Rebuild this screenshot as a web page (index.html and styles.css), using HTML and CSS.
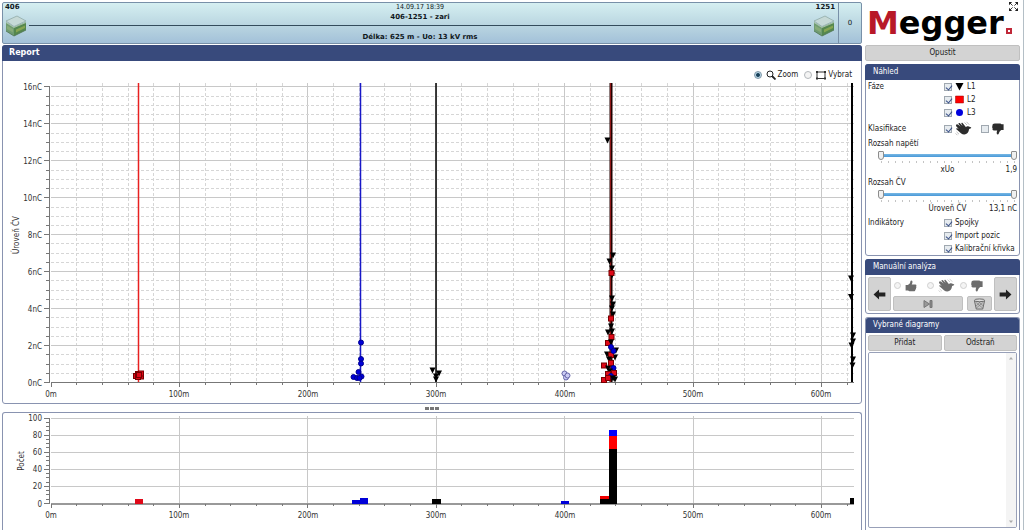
FILE: index.html
```html
<!DOCTYPE html>
<html lang="cs">
<head>
<meta charset="utf-8">
<title>406-1251 - zari</title>
<link rel="stylesheet" href="styles.css">
</head>
<body>
<svg class="symbols" aria-hidden="true">
  <symbol id="station" viewBox="0 0 22 22">
    <path d="M1 7 9 12V21L1 16Z" fill="#6f9b72"/>
    <path d="M9 12 21 7V15L9 21Z" fill="#55874e"/>
    <path d="M11 14.500 20 10.500V13L11 17.500Z" fill="#86a552"/>
    <path d="M2 10.500 8 14V17.500L2 14Z" fill="#86ab78"/>
    <path d="M1 6 12 1 21 6 9 11.500Z" fill="#c6d9d6" stroke="#8aa5a0" stroke-width=".7"/>
    <path d="M1 7.500 9 12.500 21 7.500" fill="none" stroke="#b8ceb8" stroke-width=".8"/>
    <path d="M1 16 9 21 21 15" fill="none" stroke="#4c7350" stroke-width=".8"/>
  </symbol>
  <symbol id="wave" viewBox="0 0 17 15">
    <path d="M1.300 3.700C1.800 3 2.700 3.300 3.300 3.800L5.600 5.800 3.600 3.100C3.200 2.300 4.200 1.700 4.900 2.300L7.600 5 6.300 2.600C6.100 1.700 7.100 1.500 7.600 2.100L11 6.200C11.300 5.200 12.300 4.900 13.200 5.300L15.800 6.200C16.600 6.600 16.100 7.300 15.400 7.500L14.100 8C13.800 11.300 11.900 13.300 9.300 13.500 7.100 13.600 5.400 12.200 4 10.600L1.400 8.300C.9 7.500 1.600 6.900 2.400 7.300L3.900 8.200 1.200 5.200C.8 4.600.9 4.100 1.300 3.700Z" fill="currentColor"/>
    <path d="M9.500 1.500 12 4M11.500.8 14.300 3.700M1.500 10.800 4 13.200M.6 12.400 2.400 14.200" fill="none" stroke="currentColor" stroke-width=".6" opacity=".5"/>
  </symbol>
  <symbol id="down" viewBox="0 0 12 12">
    <path d="M.4 3C.4 1.300 1.300.6 2.800.6H8.400L9.500 1.200H11.600V7H9.300C7.900 7.800 7.300 9 6.800 10.500 6.600 11.500 5.200 11.900 4.800 10.700 4.500 9.500 4.900 8.400 5.200 7.500H2C.6 7.500.1 6.500.7 5.600.1 4.800.1 3.700.4 3Z" fill="currentColor"/>
  </symbol>
  <symbol id="up" viewBox="0 0 12 12">
    <path d="M.6 5H2.700C4.600 4.200 5.300 3 5.400 1.200 5.700.2 7.100.2 7.400 1.300 7.600 2.600 7.200 3.600 6.700 4.500H10.400C11.600 4.700 11.700 5.800 11.100 6.300 11.700 7 11.500 7.800 10.900 8.100 11.200 8.900 10.900 9.500 10.300 9.700 10.300 10.700 9.700 11.200 8.900 11.200H4.400L3 10.600H.6Z" fill="currentColor"/>
  </symbol>
  <symbol id="arrow" viewBox="0 0 14 12">
    <path d="M13.500 6 7.500.6V3.700H.6V8.300H7.500V11.400Z" fill="currentColor"/>
  </symbol>
</svg>

<div class="app">
  <main class="main">
    <header class="cable">
      <div class="cable-body">
        <div class="station"><b>406</b><svg class="station-icon"><use href="#station"/></svg></div>
        <div class="cable-info">
          <time>14.09.17 18:39</time>
          <b>406-1251 - zari</b>
          <hr>
          <b>Délka: 625 m - Uo: 13 kV rms</b>
        </div>
        <div class="station station-end"><b>1251</b><svg class="station-icon"><use href="#station"/></svg></div>
      </div>
      <div class="cable-count">0</div>
    </header>

    <section class="panel">
      <h1 class="panel-title report-title">Report</h1>
      <div class="modes">
        <label><input type="radio" class="radio" name="mode" checked>
          <svg class="mode-icon" viewBox="0 0 10 10"><circle cx="4" cy="4" r="3" fill="#fff" stroke="#222"/><path d="M6 6 9.500 9.500" stroke="#222" stroke-width="1.800"/></svg>Zoom</label>
        <label><input type="radio" class="radio" name="mode">
          <svg class="mode-icon" viewBox="0 0 10 10"><path d="M1 2H9V8.500H1Z" fill="none" stroke="#333"/><path d="M0 1H2V3H0ZM8 1H10V3H8ZM0 7.500H2V9.500H0ZM8 7.500H10V9.500H8Z" fill="#333"/></svg>Vybrat</label>
      </div>
      <svg class="chart" id="level-chart" viewBox="3 82 858 321" role="img" aria-label="Úroveň ČV"></svg>
    </section>
    <div class="splitter"><i></i><i></i><i></i></div>
    <section class="panel panel-last">
      <svg class="chart" id="count-chart" viewBox="3 413 858 117" role="img" aria-label="Počet"></svg>
    </section>
  </main>

  <aside class="side">
    <div class="brand">
      <div class="logo"><span class="logo-m">M</span>egger<span class="logo-mark"></span></div>
      <button class="fullscreen" aria-label="Celá obrazovka"><svg viewBox="0 0 10 10"><path d="M0 0H3.500L0 3.500ZM10 0V3.500L6.500 0ZM0 10V6.500L3.500 10ZM10 10H6.500L10 6.500Z" fill="#222"/><path d="M1 1 4 4M9 1 6 4M1 9 4 6M9 9 6 6" stroke="#222"/></svg></button>
    </div>
    <button class="btn exit">Opustit</button>

    <section class="panel">
      <h2 class="panel-title">Náhled</h2>
      <div class="preview">
        <div class="row"><span>Fáze</span><label><input type="checkbox" class="check" checked><svg class="mark" viewBox="0 0 9 9"><path d="M.5 1H8.500L4.500 8.500Z"/></svg>L1</label></div>
        <div class="row"><span></span><label><input type="checkbox" class="check" checked><svg class="mark" viewBox="0 0 9 9"><path d="M.5 1H8.500V8H.5Z" fill="red" stroke="#900" stroke-width=".5"/></svg>L2</label></div>
        <div class="row"><span></span><label><input type="checkbox" class="check" checked><svg class="mark" viewBox="0 0 9 9"><circle cx="4.500" cy="4.500" r="3.500" fill="#00d"/></svg>L3</label></div>
        <div class="row classes"><span>Klasifikace</span>
          <label><input type="checkbox" class="check" checked aria-label="PD"><svg class="hand-wave"><use href="#wave"/></svg></label>
          <label><input type="checkbox" class="check" aria-label="Rušení"><svg class="hand"><use href="#down"/></svg></label></div>
        <div class="range-name">Rozsah napětí</div>
        <div class="range"><input type="range" value="0" aria-label="Napětí od"><input type="range" value="100" aria-label="Napětí do"></div>
        <div class="ticks"></div>
        <div class="range-foot"><span>xUo</span><output>1,9</output></div>
        <div class="range-name">Rozsah ČV</div>
        <div class="range"><input type="range" value="0" aria-label="ČV od"><input type="range" value="100" aria-label="ČV do"></div>
        <div class="ticks"></div>
        <div class="range-foot"><span>Úroveň ČV</span><output>13,1 nC</output></div>
        <div class="row"><span>Indikátory</span><label><input type="checkbox" class="check" checked>Spojky</label></div>
        <div class="row"><span></span><label><input type="checkbox" class="check" checked>Import pozic</label></div>
        <div class="row"><span></span><label><input type="checkbox" class="check" checked>Kalibrační křivka</label></div>
      </div>
    </section>

    <section class="panel">
      <h2 class="panel-title">Manuální analýza</h2>
      <div class="analysis">
        <button class="btn step" aria-label="Předchozí"><svg class="arrow arrow-back"><use href="#arrow"/></svg></button>
        <div class="verdict">
          <label><input type="radio" class="radio" name="verdict" disabled aria-label="Dobré"><svg class="hand"><use href="#up"/></svg></label>
          <label><input type="radio" class="radio" name="verdict" disabled aria-label="Nejisté"><svg class="hand-wave"><use href="#wave"/></svg></label>
          <label><input type="radio" class="radio" name="verdict" disabled aria-label="Špatné"><svg class="hand"><use href="#down"/></svg></label>
          <button class="btn skip" aria-label="Na konec"><svg viewBox="0 0 10 8"><path d="M1 .5 6.500 4 1 7.500Z" fill="#999" stroke="#777"/><path d="M7 .5H9V7.500H7Z" fill="#888" stroke="#777"/></svg></button>
          <button class="btn trash" aria-label="Smazat"><svg viewBox="0 0 13 13"><path d="M1 3 3 12H10L12 3Z" fill="#c4c4c4" stroke="#666"/><ellipse cx="6.500" cy="2.500" rx="5.500" ry="1.500" fill="#ddd" stroke="#666"/><path d="M3 5 10 11M6 4.500 11 9M10 5 3 11M7 4.500 2.500 9" stroke="#777" stroke-width=".7"/></svg></button>
        </div>
        <button class="btn step" aria-label="Další"><svg class="arrow"><use href="#arrow"/></svg></button>
      </div>
    </section>

    <section class="panel panel-last diagrams">
      <h2 class="panel-title">Vybrané diagramy</h2>
      <div class="pair"><button class="btn">Přidat</button><button class="btn">Odstraň</button></div>
      <div class="list">
        <select multiple aria-label="Vybrané diagramy"></select>
        <div class="scroll"><button aria-label="Nahoru"><svg viewBox="0 0 6 4"><path d="M1 3.500 3 1 5 3.500Z"/></svg></button><button aria-label="Dolů"><svg viewBox="0 0 6 4"><path d="M1 .5 3 3 5 .5Z"/></svg></button></div>
      </div>
    </section>
  </aside>
</div>
<script src="charts.js"></script>
</body>
</html>
```
FILE: styles.css
```css
* { box-sizing: border-box; }

body {
  margin: 0;
  background: #fff;
  color: #222;
  font: 8px/10px "DejaVu Sans Condensed", "DejaVu Sans", sans-serif;
}

button, input, select { margin: 0; padding: 0; font: inherit; color: inherit; }
label { display: flex; align-items: center; }
svg { display: block; flex: none; }
.symbols { position: absolute; width: 0; height: 0; }

.app {
  display: grid;
  grid-template-columns: minmax(0, 1fr) 155px;
  gap: 3px;
  height: 100vh;
  min-height: 500px;
  padding: 2px 3px 0 2px;
  border-right: 1px solid #b4bfc6;
  overflow: hidden;
}
.main { display: flex; flex-direction: column; min-height: 0; }

/* Cable strip */
.cable {
  display: flex;
  flex: none;
  height: 42px;
  margin-bottom: 1px;
  border: 1px solid #7890a8;
  border-radius: 2px;
  background: linear-gradient(#d5eff1, #bad6e1 55%, #a3c1d9);
  font: 7px/9px "DejaVu Sans", sans-serif;
  color: #10181c;
}
.cable-body { display: flex; flex: 1; justify-content: space-between; padding: 0 3px 0 2px; }
.station { display: flex; flex-direction: column; width: 24px; gap: 3px; }
.station-end { align-items: flex-end; }
.station-icon { width: 22px; height: 22px; }
.cable-info { flex: 1; display: flex; flex-direction: column; align-items: center; }
.cable-info time { font-family: "DejaVu Sans Condensed", sans-serif; line-height: 8px; }
.cable-info b { line-height: 12px; }
.cable-info hr { width: 100%; height: 2px; margin: 2px 0 5px; border: 0; background: #344c5c; }
.cable-count {
  display: grid;
  place-items: center;
  width: 23px;
  border-left: 1px solid #7890a8;
}

/* Panels */
.panel { border: 1px solid #8993b0; border-radius: 3px; background: #fff; }
.panel-last { flex: 1; min-height: 0; border-bottom: 0; border-radius: 3px 3px 0 0; overflow: hidden; }
.panel-title {
  margin: -1px -1px 0;
  padding: 0 8px;
  border-radius: 3px 3px 0 0;
  background: #384a7c;
  color: #fff;
  font-size: 8px;
  font-weight: 400;
  line-height: 16px;
}
.report-title { padding: 0 7px; font-family: "DejaVu Sans", sans-serif; font-weight: 700; }
.modes { display: flex; justify-content: flex-end; gap: 6px; height: 21px; padding: 6px 9px 0 0; }
.modes label { height: 16px; }
.mode-icon { width: 10px; height: 10px; margin: 0 2px 0 4px; }
.splitter { display: flex; flex: none; justify-content: center; align-items: center; gap: 1px; height: 8px; }
.splitter i { width: 4px; height: 3px; background: #777; }

/* Charts */
.chart { width: 100%; height: auto; }
.chart text { fill: #333; }
.tick-x { text-anchor: middle; }
.tick-y { text-anchor: end; }
.axis { stroke: #777; }
.axis-thick { stroke: #999; stroke-width: 2; }
.major { stroke: #c8c8c8; }
.minor { stroke: #d6d6d6; stroke-dasharray: 3 2; }
.l1 { fill: #000; }
.l2 { fill: #e00818; stroke: #700; stroke-width: 1; }
.l3 { fill: #0000d8; stroke: #000090; stroke-width: 1; }
.l3-open { fill: #ccccf4; stroke: #6666a8; }

/* Form controls */
.check, .radio {
  appearance: none;
  flex: none;
  width: 8px;
  height: 8px;
  border: 1px solid #a0a8b0;
  background: #e6ebef;
}
.check:checked::after {
  content: "";
  display: block;
  width: 3px;
  height: 5px;
  margin: 0 0 0 2px;
  border: solid #3a5088;
  border-width: 0 1px 1px 0;
  transform: rotate(40deg);
}
.radio { border-radius: 50%; border-color: #b4b8bc; background: #f4f4f4; }
.radio:checked { border-color: #8098a8; background: radial-gradient(#184058 35%, #b8d4e4 55%); }
.btn {
  display: grid;
  place-items: center;
  border: 1px solid #c0c0c0;
  border-radius: 2px;
  background: #d3d3d3;
}

/* Sidebar */
.side { display: flex; flex-direction: column; gap: 3px; min-height: 0; }
.brand { display: flex; align-items: flex-start; height: 40px; position: relative; }
.logo {
  padding-left: 2px;
  font: 700 32px/42px "DejaVu Sans", sans-serif;
  color: #000;
  white-space: nowrap;
}
.logo-m { color: #b81828; }
.logo-mark { display: inline-block; width: 6px; height: 6px; margin-left: 2px; border: 2px solid #c02838; background: #fff; }
.fullscreen { position: absolute; top: 0; right: 2px; width: 9px; height: 9px; border: 0; background: none; }
.exit { height: 16px; }

.preview { padding: 0 2px 0 2px; }
.row { display: flex; align-items: center; height: 13px; }
.row > span { flex: none; width: 76px; }
.row label { flex: none; gap: 3px; }
.mark { width: 9px; height: 9px; }
.classes { height: 19px; }
.classes label { width: 37px; }
.hand-wave { width: 17px; height: 15px; color: #2c2c2c; }
.hand { width: 12px; height: 12px; color: #2c2c2c; }
.range-name { line-height: 12px; }
.range {
  display: grid;
  height: 11px;
  margin-left: 10px;
  background: linear-gradient(#78b8e4, #4898d8) center / 100% 3px no-repeat;
}
.range input {
  grid-area: 1 / 1;
  appearance: none;
  width: 100%;
  height: 11px;
  background: none;
  pointer-events: none;
}
.range input::-webkit-slider-thumb {
  appearance: none;
  width: 6px;
  height: 9px;
  border: 1px solid #8c8c8c;
  border-radius: 1px 1px 3px 3px;
  background: #f0f0f0;
  pointer-events: auto;
}
.ticks {
  height: 2px;
  margin: 0 2px 0 13px;
  background: repeating-linear-gradient(90deg, #c4c4c4 0 1px, transparent 1px 7px);
}
.range-foot { display: grid; grid-template-columns: 1fr auto 1fr; padding-left: 10px; line-height: 14px; }
.range-foot span { grid-column: 2; }
.range-foot output { text-align: right; }

.analysis { display: flex; gap: 2px; padding: 2px; }
.step { width: 23px; height: 34px; color: #222; }
.arrow { width: 13px; height: 11px; }
.arrow-back { transform: scaleX(-1); }
.verdict {
  flex: 1;
  display: grid;
  grid-template-columns: 1fr 1fr 1fr;
  grid-template-rows: 17px 15px;
  gap: 2px 0;
}
.verdict label { gap: 4px; padding-left: 1px; }
.verdict .radio { border-color: #d0d0d0; width: 7px; height: 7px; }
.verdict .hand, .verdict .hand-wave { color: #6c6c6c; }
.skip { grid-column: 1 / 3; margin-right: -4px; }
.skip svg { width: 10px; height: 8px; }
.trash { margin-left: 8px; }
.trash svg { width: 13px; height: 12px; }

.diagrams { display: flex; flex-direction: column; }
.pair { display: grid; grid-template-columns: 1fr 1fr; gap: 2px; padding: 2px 2px 0; }
.pair .btn { height: 16px; }
.list { display: flex; flex: 1; min-height: 0; margin: 1px 2px 2px; border: 1px solid #98a0b8; border-radius: 2px; }
.list select { flex: 1; min-width: 0; border: 0; background: #fff; outline: 0; }
.scroll { display: flex; flex-direction: column; justify-content: space-between; width: 10px; background: #f4f4f4; }
.scroll button { display: grid; place-items: center; height: 10px; border: 0; background: none; }
.scroll svg { width: 6px; height: 4px; fill: #aaa; }
```
FILE: charts.js
```js
const NS = "http://www.w3.org/2000/svg";
const LEFT = 51, RIGHT = 854, METRE = 1.284;
const px = m => LEFT + m * METRE;

function add(svg, name, attrs, text) {
  const el = document.createElementNS(NS, name);
  for (const key in attrs) el.setAttribute(key, attrs[key]);
  if (text !== undefined) el.textContent = text;
  svg.appendChild(el);
}
const snap = v => Math.floor(v) + 0.5;
function line(svg, x1, y1, x2, y2, cls) {
  add(svg, "line", { x1, y1, x2, y2, class: cls });
}

function axes(svg, o) {
  for (let m = 20; m <= 620; m += 20) {
    const major = m % 100 === 0;
    if (major || o.minorGrid) line(svg, snap(px(m)), o.top, snap(px(m)), o.base, major ? "major" : "minor");
  }
  for (let v = o.step; v <= o.max; v += o.step) {
    const y = snap(o.y(v)), major = v % o.label === 0;
    if (major || o.minorGrid) line(svg, LEFT, y, RIGHT, y, major ? "major" : "minor");
  }
  line(svg, 49.5, o.y(o.max), 49.5, o.base, "axis");
  if (o.thick) line(svg, LEFT, o.base, RIGHT, o.base, "axis-thick");
  else line(svg, LEFT, o.base - 0.5, RIGHT, o.base - 0.5, "axis");
  for (let v = 0; v <= o.max; v += o.step) {
    const major = v % o.label === 0, y = snap(o.y(v));
    line(svg, major ? 44 : 46, y, 50, y, "axis");
    if (major) add(svg, "text", { x: 42, y: Math.round(o.y(v)) + 3, class: "tick-y" }, v + o.unit);
  }
  for (let m = 0; m <= 620; m += 20) {
    const major = m % 100 === 0, x = snap(px(m));
    line(svg, x, o.base, x, o.base + (major ? 4 : 2), "axis");
    if (major) add(svg, "text", { x: Math.round(px(m)), y: o.base + 14, class: "tick-x" }, m + "m");
  }
  add(svg, "text", { transform: `translate(${o.titleX} ${o.titleY}) rotate(-90)`, class: "tick-x" }, o.title);
}

const marker = {
  l1: (s, x, y) => add(s, "path", { d: `M${x - 3} ${y - 2.500}h6l-3 6z`, class: "l1" }),
  l2: (s, x, y) => add(s, "rect", { x: x - 2.500, y: y - 2.500, width: 5, height: 5, class: "l2" }),
  l3: (s, x, y) => add(s, "circle", { cx: x, cy: y, r: 2.500, class: "l3" }),
  open: (s, x, y) => add(s, "circle", { cx: x, cy: y, r: 2.500, class: "l3-open" })
};

const level = document.getElementById("level-chart");
axes(level, { top: 83, base: 383, max: 16, step: 0.5, label: 2, unit: "nC", minorGrid: true,
  y: v => 382.500 - v * 18.470, title: "Úroveň ČV", titleX: 19, titleY: 235 });

[[138.500, "#e82020", 1.500], [360.500, "#1818c8", 1.500], [436, "#000", 1.500],
 [611, "#200000", 3], [610.500, "#901818", 1], [852, "#000", 2]].forEach(([x, stroke, w]) =>
  add(level, "line", { x1: x, x2: x, y1: 83, y2: 382, stroke, "stroke-width": w }));

const points = [
  ["l2", 136, 376], ["l2", 138, 374], ["l2", 141, 376.500], ["l2", 138, 377], ["l2", 141, 373.500], ["l2", 139, 375],
  ["l3", 361, 342.500], ["l3", 361, 359], ["l3", 361, 363.500], ["l3", 358.500, 372],
  ["l3", 353.500, 377], ["l3", 357, 378], ["l3", 361.500, 376.500], ["l3", 359.500, 378],
  ["l1", 432.500, 370], ["l1", 439, 373], ["l1", 436, 376], ["l1", 436, 379],
  ["open", 564.500, 373.500], ["open", 566, 377.500], ["open", 567.500, 375.500],
  ["l1", 607.500, 140], ["l1", 613, 255], ["l1", 609.500, 261], ["l1", 612, 268],
  ["l1", 612, 275], ["l2", 611.500, 273], ["l1", 612, 298], ["l1", 613, 304],
  ["l1", 612, 308], ["l1", 613, 314], ["l2", 611, 318.500], ["l1", 611, 326],
  ["l1", 608, 332], ["l1", 612, 331], ["l2", 611.500, 337], ["l2", 608, 343],
  ["l1", 611, 342], ["l1", 607, 354], ["l1", 616, 350], ["l1", 615, 357], ["l2", 611, 355],
  ["l1", 609, 359], ["l3", 611, 347], ["l3", 613.500, 351], ["l2", 604, 365.500], ["l1", 608, 368],
  ["l2", 611, 363], ["l3", 613.500, 368], ["l1", 610, 371], ["l2", 608, 374], ["l2", 614, 373],
  ["l3", 611, 376], ["l2", 604, 380], ["l2", 608, 378], ["l1", 613, 378], ["l1", 615, 379],
  ["l1", 851, 278], ["l1", 851, 296.500], ["l1", 853, 335], ["l1", 853, 341], ["l1", 851.500, 345],
  ["l1", 853, 359], ["l1", 852.500, 365]
];
points.forEach(([kind, x, y]) => marker[kind](level, x, y));

const count = document.getElementById("count-chart");
axes(count, { top: 416, base: 504, max: 100, step: 5, label: 20, unit: "", minorGrid: false, thick: true,
  y: v => 503.500 - v * 0.855, title: "Počet", titleX: 24, titleY: 461 });

[[135, 499, 8, 5, "#e00818"], [352, 500, 8, 4, "#0000d8"], [360, 498, 8, 6, "#0000d8"],
 [432, 499, 9, 5, "#000"], [561, 501, 8, 3, "#0000d8"], [600, 499, 9, 5, "#000"],
 [600, 496, 9, 3, "#f00000"], [609, 449, 8, 55, "#000"], [609, 436, 8, 13, "#f00"],
 [609, 430, 8, 6, "#00f"], [850, 498, 4, 6, "#000"]].forEach(([x, y, width, height, fill]) =>
  add(count, "rect", { x, y, width, height, fill }));
```
